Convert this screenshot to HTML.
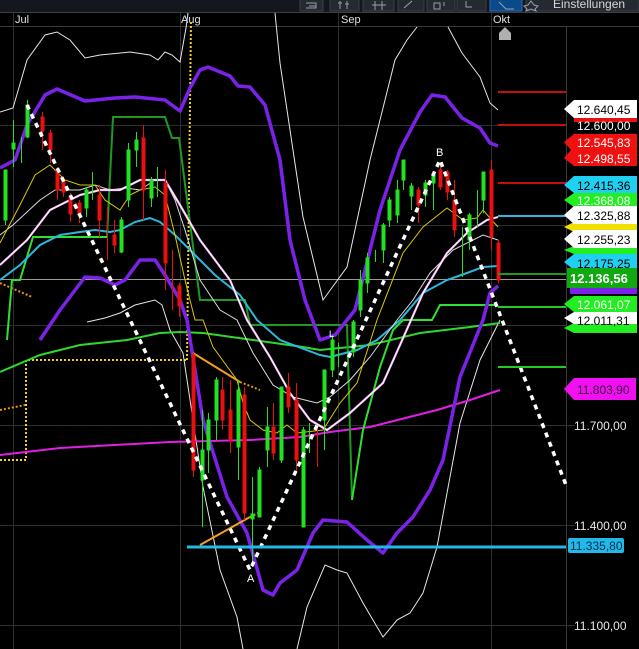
<!DOCTYPE html>
<html><head><meta charset="utf-8"><style>
html,body{margin:0;padding:0;background:#000;width:639px;height:649px;overflow:hidden}
svg{display:block}
text{font-family:"Liberation Sans",sans-serif}
</style></head><body>
<svg width="639" height="649" viewBox="0 0 639 649" xmlns="http://www.w3.org/2000/svg">
<rect width="639" height="649" fill="#000"/>
<!-- toolbar -->
<rect x="0" y="0" width="639" height="12" fill="#14181d"/>
<g fill="#252a31" stroke="#3a4049" stroke-width="1">
<rect x="300" y="-6" width="23" height="17"/><rect x="330" y="-6" width="29" height="17"/>
<rect x="363" y="-6" width="31" height="17"/><rect x="398" y="-6" width="26" height="17"/>
<rect x="427" y="-6" width="28" height="17"/><rect x="457" y="-6" width="29" height="17"/>
<rect x="526" y="-6" width="113" height="17"/>
</g>
<rect x="490" y="-6" width="32" height="17" fill="#0b4a8a" stroke="#2a6ab0"/>
<g stroke="#9aa0a8" fill="none" stroke-width="1">
<path d="M306 3h10v5h-10M309 6h7"/><path d="M340 1v8M347 1v8M338 3h4M345 4h4"/>
<path d="M372 5h14M375 1v9M382 1v9"/><path d="M404 8l8-7"/><path d="M434 3h6v6h-6zM444 2v4"/>
<path d="M466 1v6h6"/><path d="M499 2l7 7h8"/>
<path d="M531 1l3 4 4 1-3 3 1 2-5-2-5 2 1-2-3-3 4-1z"/>
</g>
<text x="553" y="8" font-size="12" fill="#d8d8d8">Einstellungen</text>
<line x1="0" y1="12.5" x2="639" y2="12.5" stroke="#3a3f46"/>
<!-- dates -->
<text x="15" y="23" font-size="11" fill="#e0e0e0">Jul</text>
<text x="181" y="23" font-size="11" fill="#e0e0e0">Aug</text>
<text x="341" y="23" font-size="11" fill="#e0e0e0">Sep</text>
<text x="493" y="23" font-size="11" fill="#e0e0e0">Okt</text>
<line x1="0" y1="26.5" x2="639" y2="26.5" stroke="#3a3a3a"/>
<!-- grid -->
<g stroke="#2e2e2e" stroke-width="1">
<line x1="13.5" y1="13" x2="13.5" y2="649"/><line x1="180.5" y1="13" x2="180.5" y2="649"/>
<line x1="338.5" y1="13" x2="338.5" y2="649"/><line x1="491.5" y1="13" x2="491.5" y2="649"/>
<line x1="0" y1="125.5" x2="566" y2="125.5"/><line x1="0" y1="225.5" x2="566" y2="225.5"/>
<line x1="0" y1="325.5" x2="566" y2="325.5"/><line x1="0" y1="425.5" x2="575" y2="425.5"/>
<line x1="0" y1="525.5" x2="575" y2="525.5"/><line x1="0" y1="625.5" x2="575" y2="625.5"/>
</g>
<line x1="566.5" y1="27" x2="566.5" y2="649" stroke="#3a3a3a"/>
<line x1="0" y1="279.5" x2="566" y2="279.5" stroke="#9a9a9a"/>
<!-- marker -->
<path d="M499 40v-7l6-6 6 6v7z" fill="#b0b0b0"/>
<!-- yellow dotted -->
<g stroke="#f0d020" stroke-width="2" stroke-dasharray="2,2" fill="none">
<path d="M0 460H26V360H187"/><path d="M187 360L191 20"/>
</g>
<g stroke="#e89020" stroke-width="2" stroke-dasharray="2,2" fill="none">
<path d="M0 283L32 297"/><path d="M0 410L25 405"/><path d="M240 382L260 390"/><path d="M250 517L258 513"/>
</g>
<!-- white outer bands -->
<g fill="none" stroke="#e6e6e6" stroke-width="1">
<path d="M0 112L13 108 27 60 45 35 57 32 70 40 85 58 100 55 130 52 150 55 158 60 165 52 172 55 180 62 186 28 188 13"/>
<path d="M275 13L280 63 303 217 323 300 347 267 370 160 395 60 407 40 417 27"/>
<path d="M448 27L462 53 480 77 490 103 498 110"/>
<path d="M87 322L105 318 120 313 135 305 155 300 162 305 170 330 183 353 203 487 220 570 237 617 243 649"/>
<path d="M297 649L307 607 325 565 337 570 347 573 363 603 383 637 397 620 410 613 423 593 437 547 460 423 480 360 500 320"/>
</g>
<!-- green MA -->
<path d="M0 372L40 355 80 345 127 340 160 333 180 332 203 333 253 340 303 347 320 350 370 345 420 333 470 327 500 323" fill="none" stroke="#2ed82e" stroke-width="2"/>
<!-- magenta -->
<path d="M0 455L60 448 170 442 250 440 300 437 330 432 370 427 437 410 470 400 500 390" fill="none" stroke="#e020e0" stroke-width="2"/>
<!-- dark green step -->
<path d="M107 237L113 117H165L172 138H179L200 300H245L250 325H347L352 500" fill="none" stroke="#1f9a1f" stroke-width="2"/>
<!-- bright green -->
<path d="M7 340L12 280H20L33 237H107" fill="none" stroke="#30e030" stroke-width="2"/>
<path d="M352 500L363 430 373 393 380 367 393 330 403 320H432L440 305H497" fill="none" stroke="#30e030" stroke-width="2"/>
<!-- cyan MA -->
<path d="M0 280L20 265 40 245 60 235 80 232 95 230 110 232 120 230 135 222 150 218 160 222 175 235 195 255 215 275 240 295 257 320 280 340 320 355 330 357 357 350 377 340 400 320 423 293 447 280 467 273 483 267 498 266" fill="none" stroke="#2ab8dc" stroke-width="2"/>
<!-- white inner -->
<path d="M0 235L13 225 40 200 55 190 80 190 95 185 110 190 125 188 140 190 155 180 165 180 175 200 185 230 200 280 220 310 237 320 253 353 273 385 293 397 317 403 330 397 350 380 370 357 397 320 413 300 430 273 453 250 483 235 498 240" fill="none" stroke="#dcdcdc" stroke-width="1"/>
<!-- yellow -->
<path d="M0 243L20 205 35 175 50 165 55 170 65 180 80 185 95 185 105 200 120 210 130 195 140 190 155 187 165 195 175 235 185 280 195 320 203 320 213 347 237 380 243 403 250 420 263 430 277 433 287 425 297 433 323 430 340 403 357 383 377 320 403 253 423 227 447 208 463 220 477 218 483 210 498 227" fill="none" stroke="#d8c800" stroke-width="1"/>
<!-- pink -->
<path d="M0 265L27 240 50 210 80 195 100 190 120 190 140 180 165 180 180 205 200 240 230 280 247 320 270 357 290 393 310 420 327 430 350 413 383 383 400 345 423 293 447 253 467 233 487 220 498 217" fill="none" stroke="#f5b0f5" stroke-width="2.2"/>
<path d="M0 265L27 240 50 210 80 195 100 190 120 190 140 180 165 180 180 205 200 240 230 280 247 320 270 357 290 393 310 420 327 430 350 413 383 383 400 345 423 293 447 253 467 233 487 220 498 217" fill="none" stroke="#fff" stroke-width="0.8"/>
<!-- purple bands -->
<g fill="none" stroke="#7b22e8" stroke-width="3.5" stroke-linejoin="round">
<path d="M0 168L15 160 27 125 45 95 57 89 85 101 115 98 135 97 165 100 180 111 190 88 200 70 208 67 230 76 238 86 250 87 265 105 280 160 290 240 305 300 320 340 335 335 355 310 380 210 400 150 420 112 432 95 445 97 462 118 480 128 490 143 498 146"/>
<path d="M40 340L60 310 85 277 100 278 115 285 125 280 140 260 155 260 165 275 180 300 187 320 203 420 227 497 247 533 263 590 273 595 280 583 297 570 313 533 323 520 347 522 367 540 383 553 397 533 413 517 430 490 443 460 460 377 483 320 490 293 498 286"/>
</g>
<!-- orange -->
<g stroke="#f0a020" stroke-width="2" fill="none"><path d="M193 353L240 382"/><path d="M200 545L250 517"/></g>
<!-- candles -->
<g stroke-width="1">
<g stroke="#22e022" fill="#22e022">
<line x1="5.5" y1="188" x2="5.5" y2="225"/><rect x="4" y="170" width="3" height="50"/>
<line x1="13.5" y1="120" x2="13.5" y2="167"/><rect x="12" y="143" width="3" height="6"/>
<line x1="21.5" y1="137" x2="21.5" y2="163"/>
<line x1="27.5" y1="100" x2="27.5" y2="138"/><rect x="26" y="105" width="3" height="32"/>
<line x1="86.5" y1="187" x2="86.5" y2="217"/><rect x="85" y="190" width="3" height="18"/>
<line x1="92.5" y1="172" x2="92.5" y2="200"/>
<line x1="121.5" y1="217" x2="121.5" y2="253"/><rect x="120" y="220" width="3" height="32"/>
<line x1="128.5" y1="143" x2="128.5" y2="207"/><rect x="127" y="150" width="3" height="50"/>
<line x1="136.5" y1="132" x2="136.5" y2="167"/><rect x="135" y="140" width="3" height="10"/>
<line x1="151.5" y1="177" x2="151.5" y2="207"/><rect x="150" y="180" width="3" height="18"/>
<line x1="157.5" y1="167" x2="157.5" y2="197"/>
<line x1="202.5" y1="410" x2="202.5" y2="527"/><rect x="201" y="450" width="3" height="30"/>
<line x1="208.5" y1="413" x2="208.5" y2="473"/><rect x="207" y="420" width="3" height="30"/>
<line x1="216.5" y1="377" x2="216.5" y2="440"/><rect x="215" y="380" width="3" height="40"/>
<line x1="238.5" y1="380" x2="238.5" y2="480"/><rect x="237" y="390" width="3" height="57"/>
<line x1="252.5" y1="477" x2="252.5" y2="567"/><rect x="251" y="514" width="3" height="5"/>
<line x1="259.5" y1="467" x2="259.5" y2="517"/><rect x="258" y="470" width="3" height="47"/>
<line x1="267.5" y1="407" x2="267.5" y2="467"/><rect x="266" y="427" width="3" height="23"/>
<line x1="281.5" y1="387" x2="281.5" y2="463"/><rect x="280" y="387" width="3" height="73"/>
<line x1="303.5" y1="427" x2="303.5" y2="527"/><rect x="302" y="430" width="3" height="97"/>
<line x1="309.5" y1="423" x2="309.5" y2="453"/>
<line x1="324.5" y1="370" x2="324.5" y2="450"/><rect x="323" y="370" width="3" height="50"/>
<line x1="332.5" y1="335" x2="332.5" y2="377"/><rect x="331" y="340" width="3" height="30"/>
<line x1="338.5" y1="343" x2="338.5" y2="367"/>
<line x1="353.5" y1="320" x2="353.5" y2="357"/><rect x="352" y="322" width="3" height="30"/>
<line x1="360.5" y1="270" x2="360.5" y2="317"/><rect x="359" y="280" width="3" height="30"/>
<line x1="367.5" y1="253" x2="367.5" y2="293"/><rect x="366" y="258" width="3" height="25"/>
<line x1="375.5" y1="250" x2="375.5" y2="262"/>
<line x1="383.5" y1="223" x2="383.5" y2="263"/><rect x="382" y="225" width="3" height="25"/>
<line x1="389.5" y1="197" x2="389.5" y2="227"/><rect x="388" y="200" width="3" height="20"/>
<line x1="397.5" y1="180" x2="397.5" y2="223"/><rect x="396" y="190" width="3" height="25"/>
<line x1="403.5" y1="160" x2="403.5" y2="190"/><rect x="402" y="160" width="3" height="20"/>
<line x1="411.5" y1="183" x2="411.5" y2="210"/><rect x="410" y="186" width="3" height="10"/>
<line x1="425.5" y1="180" x2="425.5" y2="207"/><rect x="424" y="183" width="3" height="12"/>
<line x1="433.5" y1="173" x2="433.5" y2="210"/><rect x="432" y="175" width="3" height="8"/>
<line x1="462.5" y1="227" x2="462.5" y2="277"/>
<line x1="469.5" y1="213" x2="469.5" y2="250"/><rect x="468" y="215" width="3" height="25"/>
<line x1="477.5" y1="190" x2="477.5" y2="227"/>
<line x1="483.5" y1="172" x2="483.5" y2="213"/><rect x="482" y="172" width="3" height="28"/>
</g>
<g stroke="#e81010" fill="#e81010">
<line x1="42.5" y1="112" x2="42.5" y2="150"/><rect x="41" y="117" width="3" height="14"/>
<line x1="50.5" y1="130" x2="50.5" y2="163"/><rect x="49" y="133" width="3" height="17"/>
<line x1="57.5" y1="167" x2="57.5" y2="200"/><rect x="56" y="170" width="3" height="20"/>
<line x1="63.5" y1="177" x2="63.5" y2="197"/><rect x="62" y="180" width="3" height="12"/>
<line x1="70.5" y1="193" x2="70.5" y2="222"/><rect x="69" y="196" width="3" height="18"/>
<line x1="79.5" y1="200" x2="79.5" y2="223"/><rect x="78" y="203" width="3" height="12"/>
<line x1="99.5" y1="185" x2="99.5" y2="237"/><rect x="98" y="195" width="3" height="25"/>
<line x1="107.5" y1="207" x2="107.5" y2="260"/>
<line x1="114.5" y1="220" x2="114.5" y2="253"/><rect x="113" y="235" width="3" height="10"/>
<line x1="143.5" y1="125" x2="143.5" y2="220"/><rect x="142" y="138" width="3" height="52"/>
<line x1="165.5" y1="170" x2="165.5" y2="290"/><rect x="164" y="183" width="3" height="80"/>
<line x1="172.5" y1="250" x2="172.5" y2="310"/>
<line x1="179.5" y1="283" x2="179.5" y2="317"/><rect x="178" y="286" width="3" height="20"/>
<line x1="193.5" y1="353" x2="193.5" y2="477"/><rect x="192" y="355" width="3" height="115"/>
<line x1="222.5" y1="377" x2="222.5" y2="430"/><rect x="221" y="390" width="3" height="30"/>
<line x1="230.5" y1="380" x2="230.5" y2="453"/><rect x="229" y="410" width="3" height="30"/>
<line x1="244.5" y1="387" x2="244.5" y2="520"/><rect x="243" y="395" width="3" height="118"/>
<line x1="273.5" y1="403" x2="273.5" y2="460"/><rect x="272" y="427" width="3" height="26"/>
<line x1="288.5" y1="373" x2="288.5" y2="413"/><rect x="287" y="387" width="3" height="20"/>
<line x1="296.5" y1="383" x2="296.5" y2="473"/><rect x="295" y="400" width="3" height="60"/>
<line x1="317.5" y1="427" x2="317.5" y2="467"/>
<line x1="418.5" y1="187" x2="418.5" y2="223"/><rect x="417" y="190" width="3" height="15"/>
<line x1="440.5" y1="165" x2="440.5" y2="190"/><rect x="439" y="170" width="3" height="17"/>
<line x1="447.5" y1="170" x2="447.5" y2="200"/><rect x="446" y="172" width="3" height="20"/>
<line x1="454.5" y1="180" x2="454.5" y2="237"/><rect x="453" y="200" width="3" height="30"/>
<line x1="491.5" y1="160" x2="491.5" y2="250"/><rect x="490" y="170" width="3" height="67"/>
<line x1="498.5" y1="240" x2="498.5" y2="283"/><rect x="497" y="243" width="3" height="37"/>
</g>
</g>
<!-- zigzag -->
<path d="M27 105L250 570 440 160 566 485" fill="none" stroke="#fff" stroke-width="3.5" stroke-dasharray="5,5"/>
<text x="247" y="582" font-size="11" fill="#fff">A</text>
<text x="436" y="156" font-size="11" fill="#fff">B</text>
<text x="329" y="337" font-size="9" fill="#fff">L</text>
<!-- cyan horizontal -->
<line x1="187" y1="547" x2="566" y2="547" stroke="#22b8e8" stroke-width="3"/>
<!-- right lines -->
<g stroke-width="2">
<line x1="498" y1="92" x2="566" y2="92" stroke="#c01010"/>
<line x1="498" y1="125" x2="566" y2="125" stroke="#c01010"/>
<line x1="498" y1="183" x2="566" y2="183" stroke="#c01010"/>
<line x1="498" y1="216" x2="566" y2="216" stroke="#2ab8dc"/>
<line x1="498" y1="274" x2="566" y2="274" stroke="#1f9a1f"/>
<line x1="498" y1="307" x2="566" y2="307" stroke="#22cc22"/>
<line x1="498" y1="367" x2="566" y2="367" stroke="#22cc22"/>
</g>
<!-- labels -->
<g font-size="12">
<path d="M574 118H637V122H574z" fill="#e81010"/>
<path d="M574 100H637V118H574L564 109z" fill="#fff"/><text x="577" y="114" fill="#000">12.640,45</text>
<text x="577" y="130" fill="#fff">12.600,00</text>
<path d="M574 134H637V166H574L564 158 571 150 564 142z" fill="#f01010"/>
<text x="577" y="147" fill="#fff">12.545,83</text><text x="577" y="163" fill="#fff">12.498,55</text>
<path d="M574 176H637V193H574L564 185z" fill="#20d0f0"/><text x="577" y="190" fill="#000">12.415,36</text>
<path d="M574 193H637V207H574L564 200z" fill="#22ee22"/><text x="577" y="205" fill="#fff">12.368,08</text>
<path d="M574 222H637V232H574L564 227z" fill="#f0e000"/>
<path d="M574 206H637V224H574L564 215z" fill="#fff"/><text x="577" y="220" fill="#000">12.325,88</text>
<path d="M574 246H637V254H574L564 250z" fill="#22ee22"/>
<path d="M574 230H637V248H574L564 239z" fill="#fff"/><text x="577" y="244" fill="#000">12.255,23</text>
<path d="M574 254H637V270H574L564 262z" fill="#20d0f0"/><text x="577" y="268" fill="#000">12.175,25</text>
<path d="M570 287H637V294H570z" fill="#7b22e8"/>
<rect x="567" y="268" width="70" height="20" fill="#10aa10"/>
<text x="570" y="283" fill="#fff" font-weight="bold" font-size="13">12.136,56</text>
<path d="M574 296H637V312H574L564 304z" fill="#22ee22"/><text x="577" y="309" fill="#fff">12.061,07</text>
<path d="M574 323H637V333H574L564 328z" fill="#22ee22"/>
<path d="M574 312H637V324H574L564 318z" fill="#fff"/><text x="577" y="325" fill="#000">12.011,31</text>
<path d="M574 378H636V400H574L564 389z" fill="#f010f0"/><text x="577" y="394" fill="#400040">11.803,90</text>
<text x="574" y="430" fill="#e8e8e8">11.700,00</text>
<text x="574" y="530" fill="#e8e8e8">11.400,00</text>
<rect x="568" y="538" width="56" height="15" rx="2" fill="#22b8e8"/><text x="570" y="550" fill="#003050">11.335,80</text>
<text x="574" y="630" fill="#e8e8e8">11.100,00</text>
</g>
</svg>
</body></html>
